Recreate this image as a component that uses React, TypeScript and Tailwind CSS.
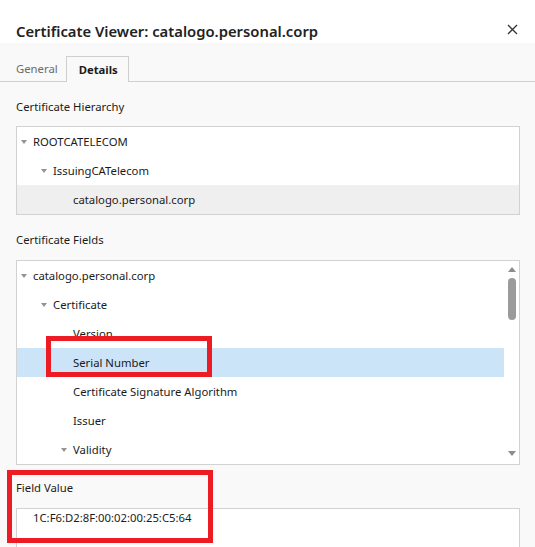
import clsx from 'clsx';

type Node = { label: string; level: number; open?: boolean; active?: boolean };

const indent = ['pl-[4px]', 'pl-[24px]', 'pl-[44px]'];

const hierarchy: Node[] = [
  { label: 'ROOTCATELECOM', level: 0, open: true },
  { label: 'IssuingCATelecom', level: 1, open: true },
  { label: 'catalogo.personal.corp', level: 2 },
];

const fields: Node[] = [
  { label: 'catalogo.personal.corp', level: 0, open: true },
  { label: 'Certificate', level: 1, open: true },
  { label: 'Version', level: 2 },
  { label: 'Serial Number', level: 2, active: true },
  { label: 'Certificate Signature Algorithm', level: 2 },
  { label: 'Issuer', level: 2 },
  { label: 'Validity', level: 2, open: true },
];

function Caret() {
  return (
    <span className="block h-0 w-0 border-x-[3.5px] border-t-[4px] border-x-transparent border-t-[#939393]" />
  );
}

function TreeRow({ node, selectedBg }: { node: Node; selectedBg: string }) {
  return (
    <div className={clsx('flex h-[29px] items-center', indent[node.level], node.active && selectedBg)}>
      <span className="flex w-[12px] shrink-0 items-center">{node.open && <Caret />}</span>
      <span className="whitespace-nowrap">{node.label}</span>
    </div>
  );
}

export default function App() {
  return (
    <div className="relative h-[547px] w-[535px] overflow-hidden bg-[#f9f9f9] font-['Noto_Sans',sans-serif] text-[11.3px] leading-[16px] text-[#1b1b1b]">
      {/* title bar */}
      <div className="flex h-[43px] items-center justify-between bg-white pl-4 pr-[17px] pt-[18px]">
        <h1 className="text-[14.8px] font-semibold text-[#222]">Certificate Viewer: catalogo.personal.corp</h1>
        <svg width="11" height="11" viewBox="0 0 11 11" className="mt-[-2px]">
          <path d="M1 1L10 10M10 1L1 10" stroke="#333" strokeWidth="1.3" />
        </svg>
      </div>

      {/* tabs */}
      <div className="flex h-[39px] items-end border-b border-[#cfcfcf] pl-2">
        <div className="mb-[-1px] flex h-[26px] items-center px-2 text-[#6b6b6b]">General</div>
        <div className="mb-[-1px] flex h-[26px] items-center border border-b-0 border-[#cfcfcf] bg-[#f9f9f9] pl-3 pr-[10px] font-bold">
          Details
        </div>
      </div>

      <div className="px-4 pt-[17px]">
        <div>Certificate Hierarchy</div>
        <div className="mt-[11px] w-[504px] border border-[#d2d2d2] bg-white">
          {hierarchy.map((n) => (
            <TreeRow key={n.label} node={{ ...n, active: n.level === 2 }} selectedBg="bg-[#efefef]" />
          ))}
        </div>

        <div className="mt-[17px]">Certificate Fields</div>
        <div className="mt-[12px] flex h-[205px] w-[504px] border border-[#d2d2d2] bg-white">
          <div className="flex-1 overflow-hidden">
            {fields.map((n) => (
              <TreeRow key={n.label} node={n} selectedBg="bg-[#cce4f7]" />
            ))}
          </div>
          {/* scrollbar */}
          <div className="flex w-[15px] flex-col items-center pt-[6px] pb-[8px]">
            <span className="block h-0 w-0 border-x-[4px] border-b-[5px] border-x-transparent border-b-[#8c8c8c]" />
            <span className="mt-[6px] block h-[42px] w-[8px] rounded-full bg-[#9b9b9b]" />
            <span className="mt-auto block h-0 w-0 border-x-[4px] border-t-[5px] border-x-transparent border-t-[#8c8c8c]" />
          </div>
        </div>

        <div className="mt-[15px]">Field Value</div>
        <div className="mt-[12px] h-[60px] w-[504px] border border-[#d2d2d2] bg-white pl-[16px] pt-[1px]">
          1C:F6:D2:8F:00:02:00:25:C5:64
        </div>
      </div>

      {/* red annotation boxes */}
      <div className="absolute left-[46px] top-[336px] h-[41px] w-[166px] border-[5px] border-[#ed1c24]" />
      <div className="absolute left-[7px] top-[470px] h-[73px] w-[206px] border-[5px] border-[#ed1c24]" />
    </div>
  );
}
